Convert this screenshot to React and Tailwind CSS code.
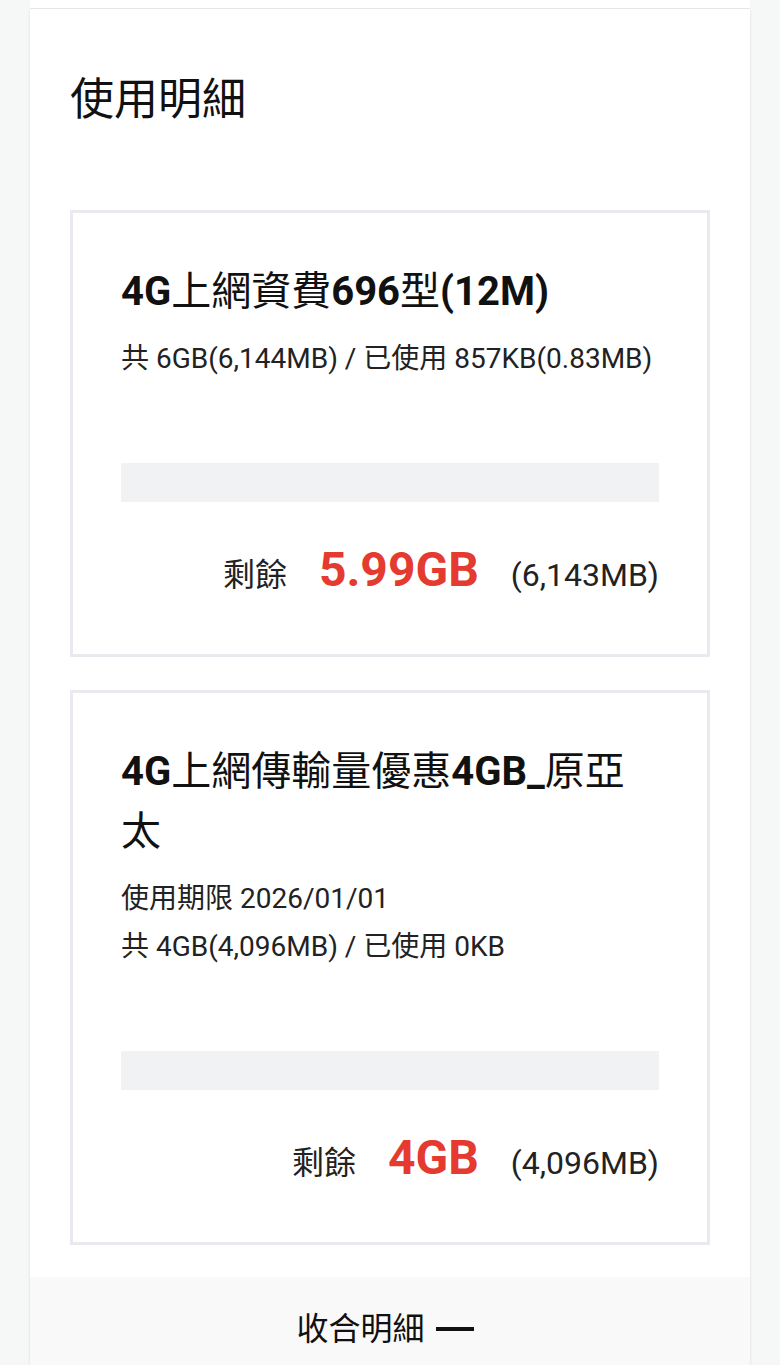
import React from "react";

const font = { fontFamily: 'Roboto, "Noto Sans CJK TC", sans-serif' };

const plans = [
  {
    name: "4G上網資費696型(12M)",
    lines: ["共 6GB(6,144MB) / 已使用 857KB(0.83MB)"],
    left: "5.99GB",
    leftMb: "(6,143MB)",
  },
  {
    name: "4G上網傳輸量優惠4GB_原亞太",
    lines: ["使用期限 2026/01/01", "共 4GB(4,096MB) / 已使用 0KB"],
    left: "4GB",
    leftMb: "(4,096MB)",
  },
];

// CJK glyphs stay regular weight, latin parts are bold (like the app does)
function MixedTitle({ text }) {
  const parts = text.match(/[\u4e00-\u9fff]+|[^\u4e00-\u9fff]+/g) || [];
  return parts.map((p, i) =>
    /[\u4e00-\u9fff]/.test(p) ? (
      <span key={i} className="font-normal">
        {p}
      </span>
    ) : (
      <span key={i}>{p}</span>
    )
  );
}

function PlanCard({ plan }) {
  return (
    <div className="border-[3px] border-[#e9eaef] px-[48px] pt-[49px] pb-[49px]">
      <h3 className="text-[40px] leading-[60px] font-bold text-[#111]">
        <MixedTitle text={plan.name} />
      </h3>
      <div className="mt-[13px]">
        {plan.lines.map((l) => (
          <p key={l} className="text-[28px] leading-[48px] text-[#222]">
            {l}
          </p>
        ))}
      </div>
      {/* usage bar, nothing used yet */}
      <div className="mt-[80px] h-[39px] bg-[#f1f2f4]" />
      <div className="mt-[38px] flex items-baseline justify-end gap-[32px] leading-[60px]">
        <span className="text-[32px] text-[#222]">剩餘</span>
        <span className="text-[48px] font-bold text-[#e53a30]">{plan.left}</span>
        <span className="text-[32px] text-[#222]">{plan.leftMb}</span>
      </div>
    </div>
  );
}

export default function App() {
  return (
    <div className="min-h-screen bg-[#f6f7f7] px-[30px]" style={font}>
      <div className="h-[9px] bg-white border-b border-[#e6e9ee]" />
      <div className="bg-white shadow-sm">
        <div className="px-[40px] pt-[58px] pb-[32px]">
          <h2 className="text-[44px] leading-[66px] text-[#111]">使用明細</h2>
          <div className="mt-[77px] flex flex-col gap-[33px]">
            {plans.map((p) => (
              <PlanCard key={p.name} plan={p} />
            ))}
          </div>
        </div>
        <div className="bg-[#f9f9f9] pt-[28px] pb-[28px] pr-[10px] flex items-center justify-center gap-[11px]">
          <span className="text-[32px] leading-[48px] text-[#111]">收合明細</span>
          <span className="w-[38px] h-[4px] bg-[#111]" />
        </div>
      </div>
    </div>
  );
}
